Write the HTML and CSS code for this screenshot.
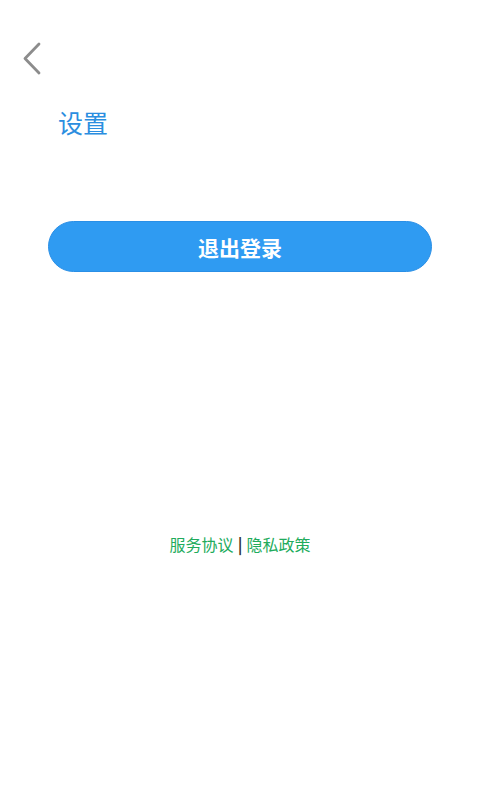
FILE: index.html
```html
<!DOCTYPE html>
<html lang="zh">
<head>
<meta charset="utf-8">
<link rel="stylesheet" href="styles.css">
</head>
<body>
<div class="page">
  <div class="topbar">
    <svg class="back" width="20" height="34" viewBox="0 0 20 34"><polyline points="16,2 2,16.5 16,31" fill="none" stroke="#8c8c8c" stroke-width="2.8" stroke-linecap="round" stroke-linejoin="round"/></svg>
  </div>
  <h1 class="title">设置</h1>
  <div class="btn-wrap">
    <button class="logout">退出登录</button>
  </div>
  <div class="links"><span class="link">服务协议</span><span class="sep">|</span><span class="link">隐私政策</span></div>
</div>
</body>
</html>
```
FILE: styles.css
```css
html, body { margin: 0; padding: 0; background: #fff; }
body { font-family: "Noto Sans CJK SC", "Noto Sans", sans-serif; }
.page { width: 480px; height: 800px; display: flex; flex-direction: column; }
.topbar { height: 90px; padding: 42px 0 0 23px; box-sizing: border-box; }
.back { display: block; }
.title { margin: 14px 0 0 58px; font-size: 25px; font-weight: 400; color: #2b8ee0; line-height: 36px; height: 36px; }
.btn-wrap { padding: 81px 48px 0; }
.logout { display: block; width: 384px; height: 51px; border-radius: 26px; border: 1px solid #2a8fe6; background: #2f9bf2; color: #fff; font-family: inherit; font-size: 21px; font-weight: 700; padding: 0; }
.links { margin-top: 260px; display: flex; justify-content: center; align-items: center; font-size: 16px; line-height: 24px; gap: 4px; }
.link { color: #21ab5c; }
.sep { color: #333; font-weight: 700; }
```
